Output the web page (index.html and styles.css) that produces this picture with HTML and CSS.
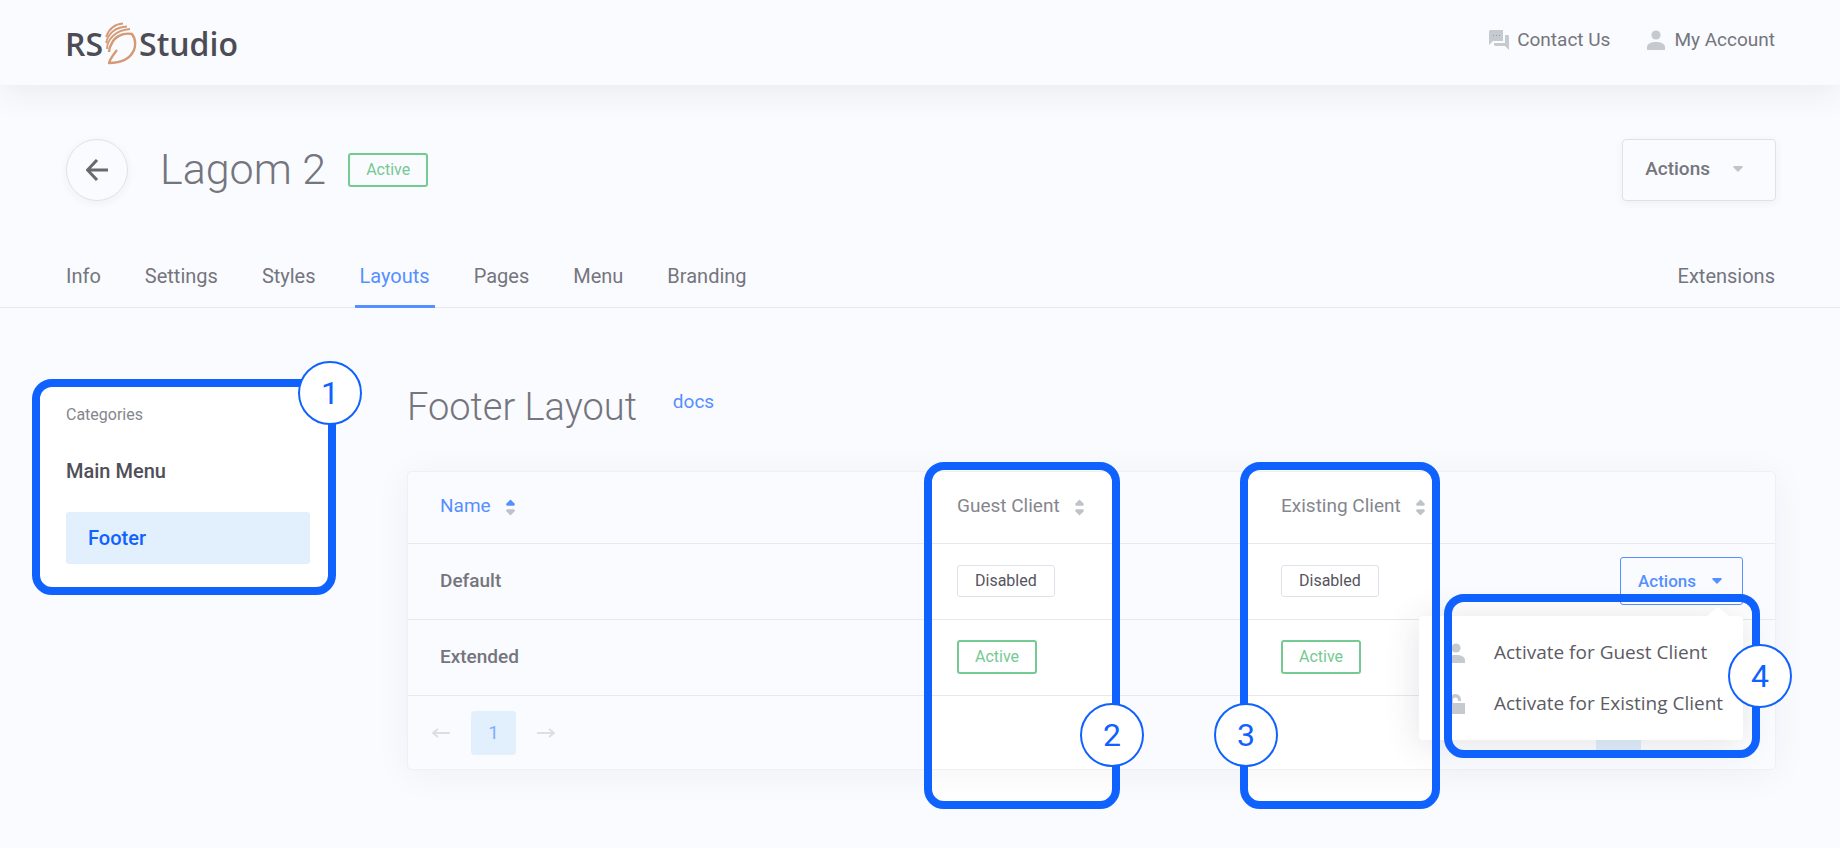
FILE: index.html
```html
<!DOCTYPE html>
<html lang="en">
<head>
<meta charset="utf-8">
<meta name="viewport" content="width=device-width, initial-scale=1">
<title>RS Studio - Lagom 2</title>
<link rel="stylesheet" href="styles.css">
</head>
<body>
<svg class="sprite" aria-hidden="true">
  <symbol id="user" viewBox="0 0 20 20"><circle cx="10" cy="5" r="4.600"/><path d="M1 20v-3c0-3 3.600-5 9-5s9 2 9 5v3z"/></symbol>
  <symbol id="sort" viewBox="0 0 10 18"><path class="up" d="M1 7L0 5l5-5 5 5-1 2z"/><path class="down" d="M1 11l-1 2 5 5 5-5-1-2z"/></symbol>
  <symbol id="caret" viewBox="0 0 10 6"><path d="M1 0h8l1 1-5 5-5-5z"/></symbol>
</svg>
<header class="topbar">
  <a class="logo" href="#" aria-label="RS Studio">
    <span>RS</span>
    <svg class="logo-mark" viewBox="0 0 34 44" aria-hidden="true">
      <path d="M13 28C9 33 6 37 5 41c11 0 21-4 25-13 2-6 1-12-2-16C18 10 10 16 8 21c-2 3-3 6-3 9" stroke-width="2.400"/>
      <path d="M3 27C3 18 11 8 26 7M2 21C4 12 11 5 23 4.500M2 15C5 7 11 2 19 1.500" stroke-width="1.800"/>
    </svg>
    <span>Studio</span>
  </a>
  <nav class="toplinks" aria-label="Account">
    <a href="#"><svg class="icon" viewBox="0 0 20 20" aria-hidden="true"><path d="M1 0h13v11H4l-4 4V1zM16 5h3l1 1v14l-4-4H6l-1-1v-2h11z"/><path class="dots" d="M4 5h1v1H4zM7 5h1v1H7zM10 5h1v1h-1z"/></svg>Contact Us</a>
    <a href="#"><svg class="icon" aria-hidden="true"><use href="#user"/></svg>My Account</a>
  </nav>
</header>
<div class="titlebar">
  <a class="back" href="#" aria-label="Back"><svg viewBox="0 0 22 22" aria-hidden="true"><path d="M22 11H2M11 1L1.500 11l9.500 10"/></svg></a>
  <h1>Lagom 2</h1>
  <span class="badge badge-active">Active</span>
  <button class="actions-main" type="button">Actions<svg class="caret" aria-hidden="true"><use href="#caret"/></svg></button>
</div>
<nav class="tabs" aria-label="Template">
  <a href="#">Info</a>
  <a href="#">Settings</a>
  <a href="#">Styles</a>
  <a class="current" href="#" aria-current="page">Layouts</a>
  <a href="#">Pages</a>
  <a href="#">Menu</a>
  <a href="#">Branding</a>
  <a class="last" href="#">Extensions</a>
</nav>
<div class="content">
  <aside class="sidebar">
    <p class="side-label">Categories</p>
    <a class="side-link" href="#">Main Menu</a>
    <a class="side-link selected" href="#">Footer</a>
    <div class="frame frame-1"><span class="marker">1</span></div>
  </aside>
  <main>
    <div class="heading"><h2>Footer Layout</h2><a href="#">docs</a></div>
    <section class="card">
      <table>
        <thead>
          <tr>
            <th class="sorted" scope="col">Name<svg class="sort" aria-hidden="true"><use href="#sort"/></svg></th>
            <th class="col-client" scope="col">Guest Client<svg class="sort" aria-hidden="true"><use href="#sort"/></svg></th>
            <th class="col-client" scope="col">Existing Client<svg class="sort" aria-hidden="true"><use href="#sort"/></svg></th>
            <th class="col-actions"></th>
          </tr>
        </thead>
        <tbody>
          <tr>
            <td>Default</td>
            <td><span class="badge">Disabled</span></td>
            <td><span class="badge">Disabled</span></td>
            <td>
              <div class="dropdown">
                <button class="actions-row" type="button" aria-expanded="true">Actions<svg class="caret" aria-hidden="true"><use href="#caret"/></svg></button>
                <div class="menu">
                  <a href="#"><svg class="icon" aria-hidden="true"><use href="#user"/></svg>Activate for Guest Client</a>
                  <a href="#"><svg class="icon" viewBox="0 0 20 20" aria-hidden="true"><path d="M2 9h2V6a5.500 5.500 0 0 1 11-1v2h-3V6a2.500 2.500 0 0 0-5 0v3h12v11H2z"/></svg>Activate for Existing Client</a>
                </div>
                <div class="frame frame-4"><span class="marker">4</span></div>
              </div>
            </td>
          </tr>
          <tr>
            <td>Extended</td>
            <td><span class="badge badge-active">Active</span></td>
            <td><span class="badge badge-active">Active</span></td>
            <td></td>
          </tr>
        </tbody>
      </table>
      <div class="pager">
        <button type="button" aria-label="Previous"><svg viewBox="0 0 18 10" aria-hidden="true"><path d="M18 5H2M6 1L1 5l5 4"/></svg></button>
        <button class="page" type="button">1</button>
        <button type="button" aria-label="Next"><svg viewBox="0 0 18 10" aria-hidden="true"><path d="M0 5h16M12 1l5 4-5 4"/></svg></button>
        <span class="page page-size"></span>
      </div>
      <div class="frame frame-2"><span class="marker">2</span></div>
      <div class="frame frame-3"><span class="marker">3</span></div>
    </section>
  </main>
</div>
</body>
</html>
```
FILE: styles.css
```css
* { box-sizing: border-box; }
html { background: #fafbff; }
body {
  min-height: 100vh;
  margin: 0;
  font: 19px/24px Roboto, sans-serif;
  color: #74757d;
}
a { color: inherit; text-decoration: none; }
button { font: inherit; color: inherit; background: none; border: 0; padding: 0; cursor: pointer; }
h1, h2, p { margin: 0; }
h1, h2 { font-weight: 300; }
.sprite { position: absolute; width: 0; height: 0; }
.icon { width: 20px; height: 20px; fill: #c5cad0; }
.icon .dots { fill: #8d959e; }
.caret { width: 10px; height: 6px; fill: currentColor; }

.topbar {
  display: flex;
  justify-content: space-between;
  height: 85px;
  padding: 0 65px;
  box-shadow: 0 4px 36px rgba(40, 45, 60, 0.09);
}
.logo {
  display: flex;
  align-items: center;
  gap: 1px;
  padding-top: 2px;
  font: 600 32px/40px "Open Sans", sans-serif;
  color: #4d4c55;
}
.logo-mark { width: 34px; height: 44px; fill: none; stroke: #d59a75; stroke-linejoin: round; }
.toplinks { display: flex; gap: 36px; padding-top: 28px; }
.toplinks a { display: flex; gap: 8px; height: 24px; }
.toplinks .icon { margin-top: 2px; }

.titlebar { display: flex; align-items: center; padding: 54px 64px 0 66px; }
.back {
  display: flex;
  align-items: center;
  justify-content: center;
  width: 62px;
  height: 62px;
  border: 1px solid #e0e1e6;
  border-radius: 50%;
  box-shadow: 0 2px 8px rgba(40, 45, 60, 0.06);
}
.back svg { width: 22px; height: 22px; fill: none; stroke: #68686f; stroke-width: 3; }
h1 { margin: 0 22px 0 32px; padding-bottom: 2px; font-size: 43px; line-height: 52px; }
.badge {
  display: inline-block;
  padding: 3px 17px;
  border: 1px solid #dfe2ea;
  border-radius: 3px;
  font-size: 16px;
  line-height: 24px;
  font-weight: 400;
  color: #55545e;
  vertical-align: middle;
}
.badge-active { border: 2px solid #75c993; padding: 3px 16px; color: #75c993; }
.actions-main {
  display: flex;
  align-items: center;
  gap: 23px;
  height: 62px;
  margin-left: auto;
  padding: 0 32px 2px 22px;
  border: 1px solid #e0e1e6;
  border-radius: 4px;
  box-shadow: 0 2px 8px rgba(40, 45, 60, 0.06);
  font-weight: 500;
}
.actions-main .caret { fill: #c0c4ca; }

.tabs {
  display: flex;
  gap: 34px;
  margin-top: 46px;
  padding: 0 60px 0 61px;
  border-bottom: 1px solid #e8e9ee;
  font-size: 20px;
}
.tabs a { padding: 17px 5px; border-bottom: 3px solid transparent; margin-bottom: -1px; }
.tabs .current { color: #568fff; border-color: #568fff; }
.tabs .last { margin-left: auto; }

.content { display: flex; gap: 97px; padding: 71px 64px 80px 66px; }
.sidebar { position: relative; flex: 0 0 244px; align-self: flex-start; padding: 24px 0 31px; }
.side-label { font-size: 16px; color: #85868d; }
.side-link {
  display: block;
  margin-top: 18px;
  padding: 13px 0;
  font-size: 20px;
  line-height: 26px;
  font-weight: 500;
  color: #504f59;
}
.side-link.selected { margin-top: 15px; padding: 13px 22px; border-radius: 3px; background: #e2effd; color: #1062fe; }
main { flex: 1; min-width: 0; }
.heading { display: flex; gap: 36px; }
.heading h2 { padding-top: 6px; font-size: 38px; line-height: 44px; }
.heading a { padding-top: 11px; color: #568fff; }

.card {
  position: relative;
  margin-top: 42px;
  border: 1px solid #eff0f4;
  border-radius: 5px;
  box-shadow: 0 4px 36px rgba(40, 45, 60, 0.05);
}
table { width: 100%; table-layout: fixed; border-collapse: collapse; }
th, td { height: 76px; padding: 0 32px; border-bottom: 1px solid #e8e9ee; text-align: left; font-weight: 500; }
th { height: 71px; padding-bottom: 2px; font-weight: 400; color: #85868d; }
.sorted { color: #568fff; }
.col-client { width: 324px; }
.col-actions { width: 202px; }
.sort { width: 9px; height: 17px; margin-left: 15px; vertical-align: middle; fill: #bfc3c9; color: #bfc3c9; }
.up { fill: currentColor; }
.sorted .sort { color: #568fff; }
.dropdown { position: relative; width: 123px; margin-left: auto; }
.actions-row {
  display: flex;
  align-items: center;
  justify-content: space-between;
  width: 100%;
  height: 48px;
  padding: 0 20px 0 17px;
  border: 1px solid #568fff;
  border-radius: 3px;
  color: #568fff;
  font-size: 17px;
  font-weight: 500;
}
.menu {
  position: absolute;
  top: 59px;
  right: 0;
  width: 324px;
  padding: 11px 0;
  border-radius: 4px;
  background: #fff;
  box-shadow: 0 4px 36px rgba(40, 50, 70, 0.14);
  font: 19px/25px "Open Sans", sans-serif;
  color: #5c5b64;
}
.menu::before {
  content: "";
  position: absolute;
  top: -9px;
  right: 14px;
  border: solid transparent;
  border-width: 0 11px 9px;
  border-bottom-color: #fff;
}
.menu a { display: flex; align-items: center; gap: 28px; padding: 13px 0 13px 27px; white-space: nowrap; }

.pager { display: flex; align-items: center; gap: 21px; padding: 15px 134px 14px 24px; }
.pager svg { display: block; width: 18px; height: 10px; fill: none; stroke: #dcdfe2; stroke-width: 2; }
.page { width: 45px; height: 44px; border-radius: 4px; background: #e2effd; color: #83acff; }
.page-size { margin-left: auto; }

/* Numbered callouts: the white fill sits beneath the page content, the outline above it. */
.frame { position: absolute; border: 8px solid #1062fe; border-radius: 20px; pointer-events: none; }
.frame::before { content: ""; position: absolute; z-index: -1; inset: 0; border-radius: 12px; background: #fff; }
.marker {
  position: absolute;
  width: 64px;
  height: 64px;
  border: 2px solid #1062fe;
  border-radius: 50%;
  background: #fff;
  color: #1062fe;
  font-size: 32px;
  line-height: 60px;
  font-weight: 400;
  text-align: center;
}
.frame-1 { inset: 0 -26px 0 -34px; }
.frame-1 .marker { top: -26px; right: -34px; }
.frame-2, .frame-3 { top: -10px; bottom: -40px; }
.frame-2 { right: 655px; width: 196px; }
.frame-2 .marker { right: -32px; bottom: 34px; }
.frame-3 { right: 335px; width: 200px; }
.frame-3 .marker { left: -34px; bottom: 34px; }
.frame-4 { top: 37px; right: -17px; width: 316px; height: 164px; }
.frame-4 .marker { top: 42px; right: -40px; }
```
